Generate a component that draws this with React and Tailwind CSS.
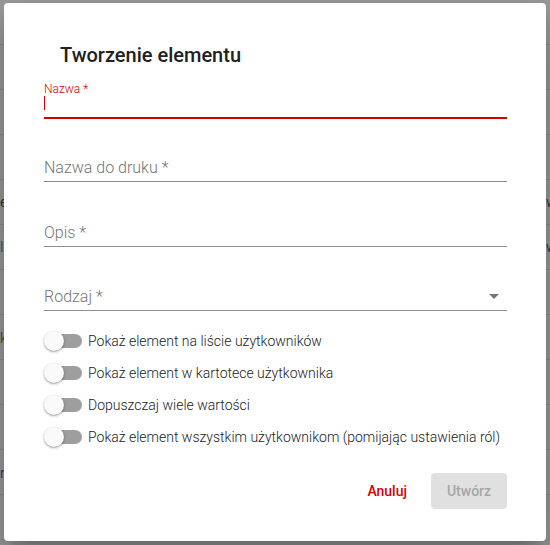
import React from "react";

const rows = [
  "Pokaż element na liście użytkowników",
  "Pokaż element w kartotece użytkownika",
  "Dopuszczaj wiele wartości",
  "Pokaż element wszystkim użytkownikom (pomijając ustawienia ról)",
];

function Switch() {
  return (
    <div className="relative w-[40px] h-[20px] shrink-0">
      <div className="absolute left-[4px] top-[3px] w-[34px] h-[14px] rounded-full bg-[#9e9e9e]" />
      <div className="absolute left-0 top-0 w-[20px] h-[20px] rounded-full bg-[#fafafa] shadow-[0_1px_3px_rgba(0,0,0,0.3),0_1px_1px_rgba(0,0,0,0.14)]" />
    </div>
  );
}

export default function App() {
  const bgLines = [];
  for (let i = 0; i < 12; i++) bgLines.push(i);
  return (
    <div
      className="relative w-[550px] h-[545px] overflow-hidden bg-[#9d9d9d]"
      style={{ fontFamily: "Roboto, 'Liberation Sans', sans-serif" }}
    >
      {/* background table (dimmed) */}
      <div className="flex flex-col pt-[44px]">
        {bgLines.map((i) => (
          <div key={i} className="h-[45px] border-t border-[#8f8f8f] shrink-0" />
        ))}
      </div>
      <div className="absolute left-0 top-[194px] text-[14px] text-[#3b3530] leading-[16px]">e</div>
      <div className="absolute left-0 top-[239px] text-[14px] text-[#3d5a6a] leading-[16px]">l</div>
      <div className="absolute left-0 top-[330px] text-[14px] text-[#6a5230] leading-[16px]">k</div>
      <div className="absolute left-0 top-[465px] text-[14px] text-[#4a3a6a] leading-[16px]">r</div>
      <div className="absolute left-[546px] top-[194px] text-[14px] text-[#3b3b4a] leading-[16px]">w</div>
      <div className="absolute left-[546px] top-[239px] text-[14px] text-[#3b3b4a] leading-[16px]">w</div>

      {/* dialog */}
      <div className="absolute left-[4px] top-[3px] w-[542px] h-[538px] bg-white rounded-[4px] shadow-[0_11px_15px_-7px_rgba(0,0,0,0.2),0_24px_38px_3px_rgba(0,0,0,0.14),0_9px_46px_8px_rgba(0,0,0,0.12)] flex flex-col">
        <h2 className="mt-[36px] pl-[56px] text-[20px] leading-[32px] font-medium text-[#212121]">
          Tworzenie elementu
        </h2>

        <div className="flex flex-col pl-[40px] pr-[39px]">
          {/* Field 1 (focused) */}
          <div className="mt-[11px] flex flex-col border-b-2 border-[#d50000] pb-[7px]">
            <div className="text-[12px] leading-[14px] font-light text-[#d50000]">Nazwa *</div>
            <div className="h-[14px] w-[1px] bg-[#d50000]" />
          </div>

          {/* Field 2 */}
          <div className="h-[63px] flex items-end border-b border-[#8d8d8d] pb-[4px]">
            <span className="text-[16px] leading-[19px] font-light text-[#757575]">Nazwa do druku *</span>
          </div>

          {/* Field 3 */}
          <div className="h-[65px] flex items-end border-b border-[#8d8d8d] pb-[4px]">
            <span className="text-[16px] leading-[19px] font-light text-[#757575]">Opis *</span>
          </div>

          {/* Field 4 (select) */}
          <div className="h-[64px] flex items-end justify-between border-b border-[#8d8d8d] pb-[4px]">
            <span className="text-[16px] leading-[19px] font-light text-[#757575]">Rodzaj *</span>
            <svg width="24" height="24" viewBox="0 0 24 24" className="mb-[-2px] mr-[1px]">
              <path d="M7 10l5 5 5-5z" fill="#757575" />
            </svg>
          </div>

          {/* switches */}
          <div className="mt-[14px] flex flex-col">
            {rows.map((r) => (
              <div key={r} className="h-[32px] flex items-center gap-[4px]">
                <Switch />
                <span className="text-[14px] leading-[20px] font-light text-[#222] whitespace-nowrap">{r}</span>
              </div>
            ))}
          </div>

          {/* actions */}
          <div className="mt-[20px] flex justify-end items-center gap-[24px]">
            <span className="text-[14px] font-medium text-[#d50000] leading-[20px]">Anuluj</span>
            <div className="w-[76px] h-[36px] rounded-[4px] bg-[#e0e0e0] flex items-center justify-center text-[14px] font-medium text-[#a6a6a6]">
              Utwórz
            </div>
          </div>
        </div>
      </div>
    </div>
  );
}
